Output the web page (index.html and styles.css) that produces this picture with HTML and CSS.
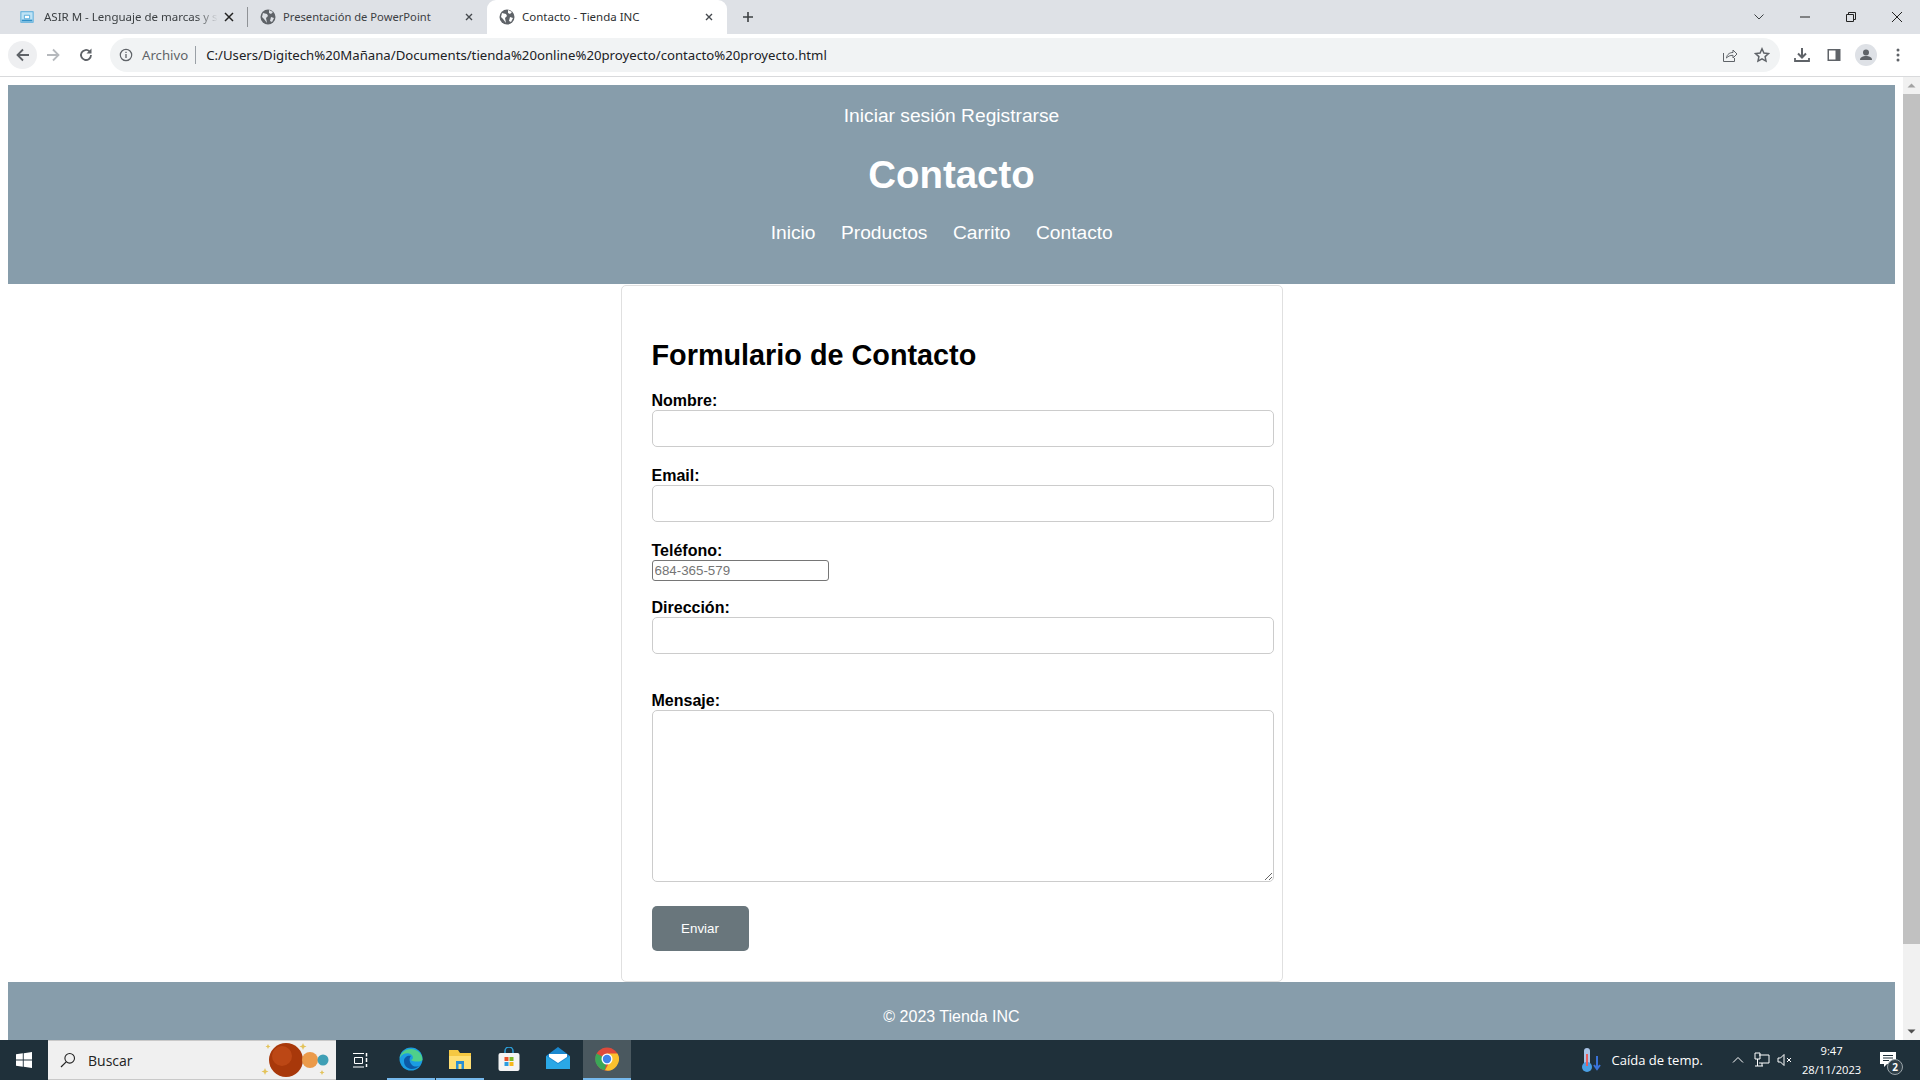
FILE: index.html
```html
<!DOCTYPE html>
<html lang="es">
<head>
<meta charset="utf-8">
<title>Contacto - Tienda INC</title>
<link rel="stylesheet" href="styles.css">
</head>
<body>
<div class="screen">
  <div class="tabbar">
    <div class="tab tab-first">
      <svg class="fav fav-book" viewBox="0 0 16 16"><rect x="1" y="2" width="14" height="12" fill="#bfe3f5" stroke="#4aa6d8"/><path d="M5 6h6v4H5z" fill="#fff" stroke="#4aa6d8"/><path d="M2 12h12" stroke="#2f8fc7" stroke-width="2"/></svg>
      <span class="tab-title tab-fade">ASIR M - Lenguaje de marcas y s</span>
      <svg class="tab-x" viewBox="0 0 10 10"><path d="M1 1l8 8M9 1l-8 8" stroke="#222" stroke-width="1.5"/></svg>
    </div>
    <div class="tab-sep"></div>
    <div class="tab tab-second">
      <svg class="fav" viewBox="0 0 16 16"><circle cx="8" cy="8" r="7.5" fill="#5f6368"/><path d="M3 4l4 1 1 2-2 2 1 5-3-4-2-2zM9 1l4 2-2 2-2-1zM11 8l3 1-2 4-2-1z" fill="#dee1e6"/></svg>
      <span class="tab-title title-tight">Presentación de PowerPoint</span>
      <svg class="tab-x" viewBox="0 0 10 10"><path d="M2 2l6 6M8 2l-6 6" stroke="#45494e" stroke-width="1.4"/></svg>
    </div>
    <div class="tab tab-active">
      <svg class="fav" viewBox="0 0 16 16"><circle cx="8" cy="8" r="7.5" fill="#5f6368"/><path d="M3 4l4 1 1 2-2 2 1 5-3-4-2-2zM9 1l4 2-2 2-2-1zM11 8l3 1-2 4-2-1z" fill="#fff"/></svg>
      <span class="tab-title">Contacto - Tienda INC</span>
      <svg class="tab-x" viewBox="0 0 10 10"><path d="M2 2l6 6M8 2l-6 6" stroke="#45494e" stroke-width="1.4"/></svg>
    </div>
    <svg class="new-tab" viewBox="0 0 12 12"><path d="M6 1v10M1 6h10" stroke="#3c4043" stroke-width="1.6"/></svg>
    <div class="win-controls">
      <svg class="win-btn" viewBox="0 0 12 12"><path d="M1.5 3.5L6 8l4.5-4.5" fill="none" stroke="#3c4043"/></svg>
      <svg class="win-btn" viewBox="0 0 12 12"><path d="M1 6h10" stroke="#222"/></svg>
      <svg class="win-btn" viewBox="0 0 12 12"><path d="M1.5 3.5h7v7h-7zM3.5 3.5v-2h7v7h-2" fill="none" stroke="#222"/></svg>
      <svg class="win-btn" viewBox="0 0 12 12"><path d="M1 1l10 10M11 1L1 11" stroke="#222"/></svg>
    </div>
  </div>
  <div class="toolbar">
    <div class="nav-circle">
      <svg class="tool-icon" viewBox="0 0 16 16"><path d="M14 8H3M8 2.5L2.5 8 8 13.5" fill="none" stroke="#5f6368" stroke-width="1.8"/></svg>
    </div>
    <svg class="tool-icon nav-forward" viewBox="0 0 16 16"><path d="M2 8h11M8 2.5L13.5 8 8 13.5" fill="none" stroke="#b6b9bd" stroke-width="1.8"/></svg>
    <svg class="tool-icon nav-reload" viewBox="0 0 16 16"><path d="M13 8a5 5 0 1 1-1.5-3.6" fill="none" stroke="#5f6368" stroke-width="1.8"/><path d="M13.5 1.5v5h-5z" fill="#5f6368"/></svg>
    <div class="omnibox">
      <svg class="info-icon" viewBox="0 0 14 14"><circle cx="7" cy="7" r="5.7" fill="none" stroke="#5f6368" stroke-width="1.2"/><path d="M7 6v4M7 3.8v1.2" stroke="#5f6368" stroke-width="1.3"/></svg>
      <span class="omni-chip">Archivo</span>
      <span class="omni-sep"></span>
      <span class="omni-url">C:/Users/Digitech%20Mañana/Documents/tienda%20online%20proyecto/contacto%20proyecto.html</span>
      <svg class="omni-share" viewBox="0 0 16 16"><path d="M1.5 6v8.5h11V11" fill="none" stroke="#5f6368"/><path d="M4.5 11c.5-4 3.5-5.5 6.5-5.500V3l4 4-4 4V8.300c-3 0-5 1-6.500 2.700z" fill="none" stroke="#5f6368"/></svg>
      <svg class="omni-star" viewBox="0 0 16 16"><path d="M8 1.800l1.900 4.200 4.600.5-3.400 3.100.9 4.500L8 11.800l-4 2.300.9-4.500L1.500 6.500l4.600-.5z" fill="none" stroke="#5f6368" stroke-width="1.500"/></svg>
    </div>
    <div class="tool-right">
      <svg class="tool-icon" viewBox="0 0 16 16"><path d="M8 1v9M4 6.500L8 10.500l4-4" fill="none" stroke="#5f6368" stroke-width="2"/><path d="M1 11v3h14v-3" fill="none" stroke="#5f6368" stroke-width="1.800"/></svg>
      <svg class="tool-icon" viewBox="0 0 16 16"><rect x="1.500" y="2" width="13" height="12" fill="#5f6368"/><rect x="3" y="3.500" width="6.500" height="9" fill="#fff"/></svg>
      <div class="avatar"><svg viewBox="0 0 16 16"><circle cx="8" cy="5.500" r="3" fill="#5f6368"/><path d="M2 13c0-3 3-4 6-4s6 1 6 4z" fill="#5f6368"/></svg></div>
      <svg class="tool-dots" viewBox="0 0 4 16"><circle cx="2" cy="3" r="1.500" fill="#5f6368"/><circle cx="2" cy="8" r="1.500" fill="#5f6368"/><circle cx="2" cy="13" r="1.500" fill="#5f6368"/></svg>
    </div>
  </div>
  <div class="browser-view">
    <div class="page">
      <header class="site-header">
        <div class="auth-links"><a>Iniciar sesión</a> <a>Registrarse</a></div>
        <h1 class="site-title">Contacto</h1>
        <nav class="site-nav"><a>Inicio</a><a>Productos</a><a>Carrito</a><a>Contacto</a></nav>
      </header>
      <main class="form-box">
        <h2 class="form-title">Formulario de Contacto</h2>
        <form>
          <label class="field-label">Nombre:</label>
          <input class="field" type="text">
          <label class="field-label">Email:</label>
          <input class="field" type="email">
          <label class="field-label">Teléfono:</label>
          <input class="phone" type="tel" placeholder="684-365-579">
          <label class="field-label">Dirección:</label>
          <input class="field field-address" type="text">
          <label class="field-label">Mensaje:</label>
          <textarea class="field field-message"></textarea>
          <button class="submit" type="button">Enviar</button>
        </form>
      </main>
      <footer class="site-footer">© 2023 Tienda INC</footer>
    </div>
    <div class="scrollbar">
      <svg class="sb-arrow" viewBox="0 0 17 17"><path d="M4.500 10.500L8.500 6.500l4 4z" fill="#a3a3a3"/></svg>
      <div class="sb-thumb"></div>
      <svg class="sb-arrow" viewBox="0 0 17 17"><path d="M4.500 6.500L8.500 10.500l4-4z" fill="#505050"/></svg>
    </div>
  </div>
  <div class="taskbar">
    <svg class="tb-start" viewBox="0 0 16 16"><path d="M0 2.300l6.800-1v6.200H0zM7.700 1.200L16 0v7.500H7.700zM0 8.400h6.800v6.300L0 13.700zM7.700 8.400H16V16l-8.300-1.200z" fill="#fff"/></svg>
    <div class="tb-search">
      <svg class="tb-lens" viewBox="0 0 16 16"><circle cx="9.700" cy="6.300" r="4.800" fill="none" stroke="#222" stroke-width="1.100"/><path d="M6.200 9.800L1 15" stroke="#222" stroke-width="1.200"/></svg>
      <span class="tb-search-text">Buscar</span>
      <svg class="tb-planets" viewBox="0 0 72 40"><circle cx="29" cy="20" r="17" fill="#a8380a"/><circle cx="25" cy="16" r="10" fill="#c9521c" opacity=".6"/><circle cx="53" cy="20" r="8" fill="#eb9a4a"/><circle cx="66" cy="20" r="5.500" fill="#3f9fb5"/><path d="M8 28l1 2.500 2.500 1-2.500 1L8 35l-1-2.500-2.500-1 2.500-1zM46 3l1 2.500 2.500 1-2.500 1-1 2.500-1-2.500-2.500-1 2.500-1zM11 4l.8 1.700 1.700.8-1.700.8L11 9l-.8-1.700-1.700-.8 1.700-.8zM65 30l.8 1.700 1.700.8-1.700.8-.8 1.700-.8-1.700-1.700-.8 1.700-.8z" fill="#e3c35a"/></svg>
    </div>
    <svg class="tb-taskview" viewBox="0 0 16 16"><path d="M2.500 5.500h8v6h-8zM1 1.500h11M1 15h11" fill="none" stroke="#fff"/><path d="M14.500 1v3.500M14.500 6v4M14.500 12v3" stroke="#fff" stroke-width="1.500"/></svg>
    <div class="tb-app tb-running">
      <svg viewBox="0 0 24 24"><circle cx="12" cy="12" r="11.500" fill="#1b9de2"/><path d="M23.500 13c0-6-5-11-11.500-11S.800 7 .800 11c2-5 9-6 12-3 2 2 1 5-1 5 3 2 10 2 11.700 0z" fill="#4fd08a"/><path d="M5 14c0-4 4-6 7-5-2 2-2 6 1 9 2 2 6 2 8 0-3 4-9 5-12 3-3-1.500-4-4-4-7z" fill="#0c5aa6"/></svg>
    </div>
    <div class="tb-app tb-running">
      <svg viewBox="0 0 24 24"><path d="M1 3h9l2 3h11v16H1z" fill="#f5c842"/><path d="M1 9h22v13H1z" fill="#ffdf74"/><path d="M8 22v-8h8v8h-2.500v-5h-3v5z" fill="#2a8fd4"/></svg>
    </div>
    <div class="tb-app">
      <svg viewBox="0 0 24 24"><path d="M8 7V4a4 4 0 0 1 8 0v3" fill="none" stroke="#2c9fd9" stroke-width="1.500"/><rect x="1.500" y="6" width="21" height="18" rx="2" fill="#f4f4f4"/><rect x="7.500" y="10" width="4" height="4" fill="#e8532b"/><rect x="12.500" y="10" width="4" height="4" fill="#7db928"/><rect x="7.500" y="15" width="4" height="4" fill="#2b9de0"/><rect x="12.500" y="15" width="4" height="4" fill="#f7b81c"/></svg>
    </div>
    <div class="tb-app">
      <svg viewBox="0 0 24 24"><path d="M0 9L12 0l12 9v13H0z" fill="#1a88cf"/><path d="M0 9l12 8 12-8v13H0z" fill="#2aa8e6"/><path d="M3 7h18v3l-9 6-9-6z" fill="#fff"/></svg>
    </div>
    <div class="tb-app tb-running tb-active">
      <svg viewBox="0 0 24 24"><circle cx="12" cy="12" r="11.500" fill="#de4a3b"/><path d="M12 12L1.500 6.500A11.500 11.500 0 0 0 10 23.300z" fill="#3ba757"/><path d="M12 6.500h10.500A11.500 11.500 0 0 1 10 23.300L15 14z" fill="#fbc02d"/><circle cx="12" cy="12" r="5.500" fill="#fff"/><circle cx="12" cy="12" r="4.200" fill="#3f83ea"/></svg>
    </div>
    <div class="tb-tray">
      <svg class="tray-thermo" viewBox="0 0 20 26"><rect x="3" y="1" width="6" height="17" rx="3" fill="#a9c3e6"/><circle cx="6" cy="20" r="5" fill="#4a9fe3"/><rect x="5" y="7" width="2" height="12" fill="#e95c5c"/><path d="M16 9v12M13 18l3 4 3-4" fill="none" stroke="#3a72d8" stroke-width="2"/></svg>
      <span class="tray-weather">Caída de temp.</span>
      <svg class="tray-caret" viewBox="0 0 12 12"><path d="M1 8.500L6 3.500l5 5" fill="none" stroke="#fff"/></svg>
      <svg class="tray-net" viewBox="0 0 16 16"><path d="M5 3h10v8H5M1 1h5v6H1zM3.500 7v7M1 14h8M8 11v3" fill="none" stroke="#fff"/></svg>
      <svg class="tray-vol" viewBox="0 0 16 16"><path d="M1 6h2.500L7 2.500v11L3.500 10H1z" fill="none" stroke="#fff"/><path d="M10 6l4 4M14 6l-4 4" stroke="#fff"/></svg>
      <div class="tray-clock"><span>9:47</span><span>28/11/2023</span></div>
      <div class="tray-notify">
        <svg viewBox="0 0 18 18"><path d="M1 1h16v12H8l-3 3v-3H1z" fill="#fff"/><path d="M4 4.500h10M4 7h10M4 9.500h6" stroke="#1f303a"/></svg>
        <span class="notify-badge">2</span>
      </div>
    </div>
  </div>
</div>
</body>
</html>
```
FILE: styles.css
```css
* { box-sizing: border-box; }
html, body { margin: 0; padding: 0; height: 100%; overflow: hidden; }
.screen {
  width: 1920px; height: 1080px; display: flex; flex-direction: column;
  font-family: "Liberation Sans", Arial, sans-serif; background: #fff;
}

/* tab strip */
.tabbar {
  height: 34px; flex: none; background: #dee1e6; display: flex; align-items: center;
  font-family: "Noto Sans", sans-serif; font-size: 11.5px; color: #3c4043;
}
.tab { display: flex; align-items: center; height: 34px; position: relative; }
.tab-first { width: 247px; padding-left: 20px; }
.tab-sep { width: 1px; height: 20px; background: #8f9296; }
.tab-second { width: 239px; padding-left: 12px; }
.tab-active { width: 240px; padding-left: 12px; background: #fff; border-radius: 9px 9px 0 0; color: #2d2f31; }
.fav { width: 16px; height: 16px; flex: none; margin-right: 7px; }
.fav-book { width: 14px; height: 14px; margin-right: 10px; }
.tab-second .fav, .tab-active .fav { margin-right: 7px; }
.tab-title { white-space: nowrap; flex: 1; padding-bottom: 2px; }
.title-tight { font-size: 11.2px; }
.tab-fade { flex: none; -webkit-mask-image: linear-gradient(to right, #000 88%, transparent); mask-image: linear-gradient(to right, #000 88%, transparent); }
.tab-x { width: 10px; height: 10px; flex: none; position: absolute; right: 13px; top: 12px; }
.new-tab { width: 12px; height: 12px; margin-left: 15px; flex: none; }
.win-controls { margin-left: auto; display: flex; align-items: center; gap: 34px; padding-right: 17px; }
.win-btn { width: 12px; height: 12px; }

/* address bar */
.toolbar {
  height: 43px; flex: none; background: #fff; border-bottom: 1px solid #d9dadc;
  display: flex; align-items: center; padding-left: 8px;
}
.nav-circle { width: 29px; height: 28px; border-radius: 50%; background: #eeeff1; display: flex; align-items: center; justify-content: center; }
.tool-icon { width: 16px; height: 16px; flex: none; }
.nav-forward { margin-left: 8px; }
.nav-reload { margin-left: 17px; }
.omnibox {
  margin-left: 16px; width: 1670px; height: 34px; border-radius: 17px; background: #f1f3f4;
  display: flex; align-items: center; padding-left: 9px; position: relative;
  font-family: "Noto Sans", sans-serif; font-size: 13.2px; color: #202124;
}
.info-icon { width: 14px; height: 14px; flex: none; }
.omni-chip { margin-left: 9px; color: #5f6368; font-size: 13.2px; }
.omni-sep { width: 1px; height: 18px; background: #9aa0a6; margin: 0 10px 0 7px; }
.omni-url { white-space: nowrap; }
.omni-share { width: 16px; height: 16px; position: absolute; right: 42px; top: 9px; }
.omni-star { width: 16px; height: 16px; position: absolute; right: 10px; top: 9px; }
.tool-right { display: flex; align-items: center; margin-left: 14px; gap: 16px; }
.avatar { width: 22px; height: 22px; border-radius: 50%; background: #dee1e6; padding: 3px; margin: 0 -3px; display: flex; }
.avatar svg { width: 16px; height: 16px; }
.tool-dots { width: 4px; height: 16px; margin-left: 6px; }

/* page */
.browser-view { flex: 1; min-height: 0; display: flex; overflow: hidden; }
.page { flex: 1; min-width: 0; padding: 8px 8px 0; overflow: hidden; }
.site-header { background: #879dab; color: #fff; height: 199px; text-align: center; padding-top: 20px; }
.auth-links { font-size: 19.2px; line-height: 22px; }
.site-title { font-size: 38.4px; line-height: 46px; margin: 25px 0 0; font-weight: bold; }
.site-nav { display: flex; justify-content: center; gap: 25.5px; padding-right: 19.5px; margin-top: 24px; font-size: 19.2px; line-height: 22px; }
.form-box {
  width: 662px; margin: 1px auto 0; background: #fff; border: 1px solid #e0e0e0; border-radius: 5px;
  padding: 30px; height: 697px;
}
.form-title { font-size: 28.8px; line-height: 34px; margin: 22px 0 20px; font-weight: bold; color: #000; }
.field-label { display: block; font-size: 16px; line-height: 18px; font-weight: bold; color: #000; }
.field {
  display: block; width: 622px; height: 37px; margin: 0 0 20px; border: 1px solid #ccc; border-radius: 5px;
  background: #fff; padding: 10px; font-family: "Liberation Sans", Arial, sans-serif; font-size: 13.33px;
}
.phone {
  display: block; width: 177px; height: 21px; margin: 0 0 18px; border: 1px solid #767676; border-radius: 3px;
  padding: 1px 2px; font-family: "Liberation Sans", Arial, sans-serif; font-size: 13.33px;
}
.phone::placeholder { color: #757575; }
.field-address { margin-bottom: 38px; }
.field-message { height: 172px; margin-bottom: 24px; }
.submit {
  display: block; width: 97px; height: 45px; border: 0; border-radius: 5px; background: #69767c; color: #fff;
  font-family: "Liberation Sans", Arial, sans-serif; font-size: 13.33px;
}
.site-footer { background: #879dab; color: #fff; text-align: center; font-size: 16px; line-height: 18px; padding: 26px 0 24px; }
.scrollbar { width: 17px; flex: none; background: #f1f1f1; display: flex; flex-direction: column; }
.sb-arrow { width: 17px; height: 17px; flex: none; }
.sb-thumb { background: #c1c1c1; height: 850px; margin-bottom: auto; }

/* taskbar */
.taskbar {
  height: 40px; flex: none; background: #1f303a; display: flex; align-items: center; color: #fff;
  font-family: "Open Sans", sans-serif;
}
.tb-start { width: 16px; height: 16px; margin-left: 16px; flex: none; }
.tb-search {
  width: 288px; height: 40px; margin-left: 16px; background: #f0f0f0; border: 1px solid #c9c9c9; border-width: 1px 0;
  display: flex; align-items: center; padding-left: 12px; color: #222; font-size: 14px; flex: none;
}
.tb-lens { width: 16px; height: 16px; flex: none; }
.tb-search-text { margin-left: 12px; }
.tb-planets { width: 72px; height: 40px; margin-left: auto; margin-right: 7px; flex: none; overflow: visible; }
.tb-taskview { width: 16px; height: 16px; margin-left: 16px; flex: none; }
.tb-app { width: 48px; height: 40px; flex: none; display: flex; align-items: center; justify-content: center; border-bottom: 2px solid transparent; margin-left: 1px; }
.tb-taskview + .tb-app { margin-left: 19px; }
.tb-app svg { width: 24px; height: 24px; }
.tb-running { border-bottom-color: #76b9ed; }
.tb-active { background: #4a585f; }
.tb-tray { margin-left: auto; display: flex; align-items: center; }
.tray-thermo { width: 20px; height: 26px; flex: none; }
.tray-weather { margin-left: 10.6px; font-size: 13px; width: 120.4px; }
.tray-caret { width: 12px; height: 12px; flex: none; margin-right: 10px; }
.tray-net { width: 16px; height: 16px; flex: none; margin-right: 7px; }
.tray-vol { width: 16px; height: 16px; flex: none; }
.tray-clock { display: flex; flex-direction: column; align-items: center; font-size: 11.2px; line-height: 19px; width: 78px; margin-left: -0.4px; }
.tray-notify { width: 36px; height: 40px; position: relative; display: flex; align-items: center; padding-left: 10px; margin-left: -1.6px; margin-right: 15px; }
.tray-notify svg { width: 18px; height: 18px; }
.notify-badge {
  position: absolute; left: 18px; top: 19px; width: 16px; height: 16px; border-radius: 50%;
  background: #2f3f48; border: 1px solid #9aa4a9; font-size: 10px; line-height: 14px; text-align: center; font-weight: bold;
}
```
